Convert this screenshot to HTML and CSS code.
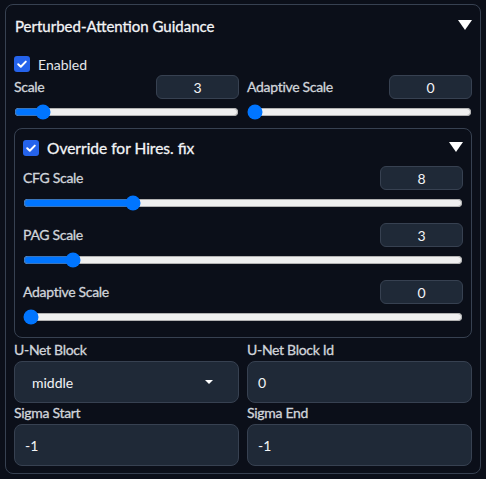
FILE: index.html
```html
<!DOCTYPE html>
<html>
<head>
<meta charset="utf-8">
<link rel="stylesheet" href="styles.css">
</head>
<body>
<div class="panel">
  <div class="head">
    <span class="title">Perturbed-Attention Guidance</span>
    <span class="tri"></span>
  </div>
  <label class="check">
    <span class="cbox"><svg viewBox="0 0 16 16" width="16" height="16"><path d="M4.2 8.3 L6.8 10.8 L11.8 5.6" fill="none" stroke="#fff" stroke-width="2" stroke-linecap="round" stroke-linejoin="round"/></svg></span>
    <span class="check-text">Enabled</span>
  </label>
  <div class="grid2 top">
    <div class="sblock">
      <div class="srow"><span class="lbl">Scale</span><div class="num">3</div></div>
      <input class="range" type="range" min="0" max="30" step="0.1" value="3">
    </div>
    <div class="sblock">
      <div class="srow"><span class="lbl">Adaptive Scale</span><div class="num">0</div></div>
      <input class="range" type="range" min="0" max="1" step="0.001" value="0">
    </div>
  </div>
  <div class="inner">
    <div class="head2">
      <label class="check check-big">
        <span class="cbox"><svg viewBox="0 0 16 16" width="16" height="16"><path d="M4.2 8.3 L6.8 10.8 L11.8 5.6" fill="none" stroke="#fff" stroke-width="2" stroke-linecap="round" stroke-linejoin="round"/></svg></span>
        <span class="check-text">Override for Hires. fix</span>
      </label>
      <span class="tri"></span>
    </div>
    <div class="sblock">
      <div class="srow"><span class="lbl">CFG Scale</span><div class="num">8</div></div>
      <input class="range" type="range" min="1" max="30" step="0.5" value="8">
    </div>
    <div class="sblock">
      <div class="srow"><span class="lbl">PAG Scale</span><div class="num">3</div></div>
      <input class="range" type="range" min="0" max="30" step="0.1" value="3">
    </div>
    <div class="sblock">
      <div class="srow"><span class="lbl">Adaptive Scale</span><div class="num">0</div></div>
      <input class="range" type="range" min="0" max="1" step="0.001" value="0">
    </div>
  </div>
  <div class="grid2 fields">
    <div class="field">
      <span class="lbl">U-Net Block</span>
      <div class="input select"><span>middle</span><span class="caret"></span></div>
    </div>
    <div class="field">
      <span class="lbl">U-Net Block Id</span>
      <div class="input"><span>0</span></div>
    </div>
    <div class="field">
      <span class="lbl">Sigma Start</span>
      <div class="input"><span>-1</span></div>
    </div>
    <div class="field">
      <span class="lbl">Sigma End</span>
      <div class="input"><span>-1</span></div>
    </div>
  </div>
</div>
</body>
</html>
```
FILE: styles.css
```css
* { box-sizing: border-box; }
html, body {
  margin: 0;
  padding: 0;
  background: #0b0f19;
}
body {
  font-family: "Lato", "Open Sans", sans-serif;
  color: #e5e7eb;
  width: 486px;
  height: 479px;
  overflow: hidden;
}
.panel {
  margin: 4px 5px 0 5px;
  width: 476px;
  height: 470px;
  border: 1px solid #374151;
  border-radius: 8px;
  padding: 0 8px;
  display: flex;
  flex-direction: column;
}
.head {
  height: 41px;
  display: flex;
  align-items: center;
  justify-content: space-between;
  padding: 0 0 0 1px;
}
.title {
  font-size: 15px;
  font-weight: 400;
  -webkit-text-stroke: 0.3px #f3f4f6;
  color: #f3f4f6;
}
.tri {
  width: 0;
  height: 0;
  border-left: 7px solid transparent;
  border-right: 7px solid transparent;
  border-top: 10px solid #ffffff;
  margin-bottom: 2px;
}
.check {
  display: flex;
  align-items: center;
  gap: 8px;
  margin-top: 10px;
  height: 16px;
}
.cbox {
  width: 16px;
  height: 16px;
  border-radius: 3px;
  background: #2563eb;
  display: flex;
}
.check-text {
  font-size: 14px;
  color: #e5e7eb;
}
.check-big .check-text {
  font-size: 15.5px;
  -webkit-text-stroke: 0.3px #f3f4f6;
  color: #f3f4f6;
}
.grid2 {
  display: grid;
  grid-template-columns: 225px 225px;
  column-gap: 8px;
}
.sblock {
  display: flex;
  flex-direction: column;
}
.top .sblock { margin-top: 3px; }
.srow {
  display: flex;
  align-items: center;
  justify-content: space-between;
  height: 24px;
}
.lbl {
  font-size: 14px;
  font-weight: 400;
  letter-spacing: -0.3px;
  -webkit-text-stroke: 0.3px #d1d5db;
  color: #d1d5db;
  line-height: 17px;
}
.srow .lbl { margin-bottom: 2px; }
.num {
  width: 83px;
  height: 24px;
  border: 1px solid #374151;
  border-radius: 6px;
  background: #1f2937;
  color: #f3f4f6;
  font-size: 14px;
  display: flex;
  align-items: center;
  justify-content: center;
}
.range {
  margin: 5px 0 0 0;
  width: 100%;
  height: 16px;
}
.inner {
  margin-top: 8px;
  height: 210px;
  border: 1px solid #374151;
  border-radius: 8px;
  padding: 0 8px;
  display: flex;
  flex-direction: column;
}
.head2 {
  display: flex;
  align-items: center;
  justify-content: space-between;
  height: 16px;
  margin-top: 11px;
}
.head2 .check { margin-top: 0; }
.inner .sblock { margin-top: 10px; }
.inner .sblock + .sblock { margin-top: 12px; }
.fields {
  margin-top: 3px;
  row-gap: 1px;
}
.field {
  display: flex;
  flex-direction: column;
  gap: 3px;
}
.input {
  height: 42px;
  border: 1px solid #374151;
  border-radius: 8px;
  background: #1f2937;
  display: flex;
  align-items: center;
  padding: 0 10px;
  font-size: 14px;
  color: #f3f4f6;
}
.select {
  padding-left: 17px;
  justify-content: space-between;
  padding-right: 25px;
}
.caret {
  width: 0;
  height: 0;
  border-left: 4px solid transparent;
  border-right: 4px solid transparent;
  border-top: 4px solid #ffffff;
}
```
